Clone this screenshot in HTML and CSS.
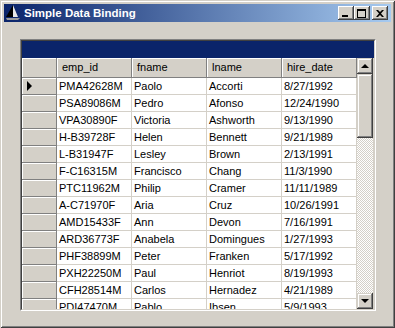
FILE: index.html
```html
<!DOCTYPE html>
<html lang="en">
<head>
    <meta charset="UTF-8">
    <title>Simple Data Binding</title>
    <link rel="stylesheet" href="styles.css">
</head>
<body>
    <div class="window">
        <div class="titlebar">
            <svg class="app-icon" width="16" height="16" viewBox="0 0 16 16">
                <polygon points="8,0 1,12 8,12" fill="#000"/>
                <polygon points="8,0 8,12 13,12" fill="#e8e8e8"/>
                <polygon points="1,13 15,13 13,15 2,15" fill="#9a9a9a"/>
            </svg>
            <span class="title">Simple Data Binding</span>
            <div class="caption-buttons">
                <div class="cap-btn">
                    <svg width="8" height="7" viewBox="0 0 8 7"><rect x="0" y="5" width="6" height="2" fill="#000"/></svg>
                </div>
                <div class="cap-btn">
                    <svg width="9" height="9" viewBox="0 0 9 9"><path d="M0 0h9v9h-9z M1 2v6h7v-6z" fill="#000" fill-rule="evenodd"/></svg>
                </div>
                <div class="cap-btn close">
                    <svg width="8" height="7" viewBox="0 0 8 7"><path d="M0 0h2l2 2 2-2h2l-3 3.5 3 3.5h-2l-2-2-2 2h-2l3-3.5z" fill="#000"/></svg>
                </div>
            </div>
        </div>
        <div class="client">
            <div class="grid">
                <div class="grid-inner">
                    <div class="grid-caption"></div>
                    <div class="grid-body">
                        <div class="table" id="table">
                            <div class="row header">
                                <div class="rh"></div>
                                <div class="hc">emp_id</div>
                                <div class="hc">fname</div>
                                <div class="hc">lname</div>
                                <div class="hc">hire_date</div>
                            </div>
                        </div>
                        <div class="vscroll">
                            <div class="sb-btn"><span class="arrow up"></span></div>
                            <div class="sb-thumb"></div>
                            <div class="sb-track"></div>
                            <div class="sb-btn"><span class="arrow down"></span></div>
                        </div>
                    </div>
                </div>
            </div>
        </div>
    </div>

    <script>
        const employees = [
            ['PMA42628M', 'Paolo', 'Accorti', '8/27/1992'],
            ['PSA89086M', 'Pedro', 'Afonso', '12/24/1990'],
            ['VPA30890F', 'Victoria', 'Ashworth', '9/13/1990'],
            ['H-B39728F', 'Helen', 'Bennett', '9/21/1989'],
            ['L-B31947F', 'Lesley', 'Brown', '2/13/1991'],
            ['F-C16315M', 'Francisco', 'Chang', '11/3/1990'],
            ['PTC11962M', 'Philip', 'Cramer', '11/11/1989'],
            ['A-C71970F', 'Aria', 'Cruz', '10/26/1991'],
            ['AMD15433F', 'Ann', 'Devon', '7/16/1991'],
            ['ARD36773F', 'Anabela', 'Domingues', '1/27/1993'],
            ['PHF38899M', 'Peter', 'Franken', '5/17/1992'],
            ['PXH22250M', 'Paul', 'Henriot', '8/19/1993'],
            ['CFH28514M', 'Carlos', 'Hernadez', '4/21/1989'],
            ['PDI47470M', 'Pablo', 'Ibsen', '5/9/1993']
        ];

        // build one row per employee, first row is the current record
        const table = document.getElementById('table');
        employees.forEach((emp, i) => {
            const row = document.createElement('div');
            row.className = 'row';
            const rh = document.createElement('div');
            rh.className = 'rh';
            if (i === 0) {
                rh.innerHTML = '<span class="current"></span>';
            }
            row.appendChild(rh);
            emp.forEach(value => {
                const cell = document.createElement('div');
                cell.className = 'cell';
                cell.textContent = value;
                row.appendChild(cell);
            });
            table.appendChild(row);
        });
    </script>
</body>
</html>
```

FILE: styles.css
```css
* {
    box-sizing: border-box;
}

body {
    margin: 0;
    font-family: "Liberation Sans", Arial, sans-serif;
    font-size: 11px;
    background-color: #d4d0c8;
}

.window {
    width: 395px;
    height: 328px;
    padding: 4px;
    display: flex;
    flex-direction: column;
    background-color: #d4d0c8;
    box-shadow: inset 1px 1px #d4d0c8, inset -1px -1px #404040, inset 2px 2px #fff, inset -2px -2px #808080;
}

.titlebar {
    height: 18px;
    display: flex;
    align-items: center;
    padding: 0 3px 0 1px;
    background: linear-gradient(to right, #0a246a, #a6caf0);
}

.app-icon {
    flex: none;
}

.title {
    flex: 1;
    margin-left: 3px;
    color: #fff;
    font-weight: bold;
    font-size: 11.5px;
}

.caption-buttons {
    display: flex;
}

.cap-btn {
    width: 16px;
    height: 14px;
    display: flex;
    align-items: center;
    justify-content: center;
    padding-right: 1px;
    background-color: #d4d0c8;
    box-shadow: inset -1px -1px #404040, inset 1px 1px #fff, inset -2px -2px #808080;
}

.cap-btn.close {
    margin-left: 2px;
}

.client {
    flex: 1;
    padding: 17px 0 0 16px;
}

.grid {
    width: 356px;
    height: 272px;
    border: 1px solid;
    border-color: #808080 #fff #fff #808080;
}

.grid-inner {
    height: 100%;
    display: flex;
    flex-direction: column;
    border: 1px solid;
    border-color: #404040 #d4d0c8 #d4d0c8 #404040;
}

.grid-caption {
    height: 17px;
    background-color: #0a246a;
}

.grid-body {
    flex: 1;
    display: flex;
    overflow: hidden;
    background-color: #d4d0c8;
}

.table {
    width: 335px;
    overflow: hidden;
}

.row {
    display: flex;
    height: 17px;
}

.row.header {
    height: 20px;
}

.rh {
    width: 35px;
    flex: none;
    display: flex;
    align-items: center;
    padding-left: 5px;
    background-color: #d4d0c8;
    border-right: 1px solid #808080;
    border-bottom: 1px solid #808080;
    box-shadow: inset 1px 1px #fff;
}

.current {
    width: 0;
    height: 0;
    border-top: 5px solid transparent;
    border-bottom: 5px solid transparent;
    border-left: 5px solid #000;
}

.hc {
    width: 75px;
    flex: none;
    padding: 0 0 0 5px;
    line-height: 19px;
    color: #000;
    background-color: #d4d0c8;
    border-right: 1px solid #808080;
    border-bottom: 1px solid #808080;
    box-shadow: inset 1px 1px #fff;
}

.cell {
    width: 75px;
    flex: none;
    padding-left: 2px;
    line-height: 16px;
    white-space: nowrap;
    overflow: hidden;
    background-color: #fff;
    border-right: 1px solid #d4d0c8;
    border-bottom: 1px solid #d4d0c8;
}

.vscroll {
    width: 16px;
    display: flex;
    flex-direction: column;
}

.sb-btn {
    height: 16px;
    flex: none;
    display: flex;
    align-items: center;
    justify-content: center;
    background-color: #d4d0c8;
    box-shadow: inset -1px -1px #404040, inset 1px 1px #d4d0c8, inset -2px -2px #808080, inset 2px 2px #fff;
}

.arrow {
    width: 0;
    height: 0;
    border-left: 4px solid transparent;
    border-right: 4px solid transparent;
}

.arrow.up {
    border-bottom: 4px solid #000;
}

.arrow.down {
    border-top: 4px solid #000;
}

.sb-thumb {
    height: 64px;
    flex: none;
    background-color: #d4d0c8;
    box-shadow: inset -1px -1px #404040, inset 1px 1px #d4d0c8, inset -2px -2px #808080, inset 2px 2px #fff;
}

.sb-track {
    flex: 1;
    background: repeating-conic-gradient(#d4d0c8 0 25%, #fff 0 50%) 0 0 / 2px 2px;
}
```
